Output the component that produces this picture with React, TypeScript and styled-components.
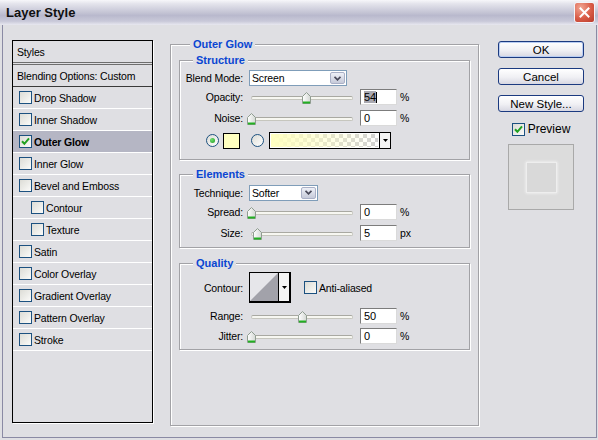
import styled, { createGlobalStyle } from 'styled-components';

const GlobalStyle = createGlobalStyle`
  html, body {
    margin: 0;
    padding: 0;
    background: #dfdfe3;
  }
  body {
    font-family: "Liberation Sans", Arial, sans-serif;
    font-size: 10.5px;
    letter-spacing: -0.15px;
    color: #000;
  }
`;

const Window = styled.div`
  width: 598px;
  height: 440px;
  display: flex;
  flex-direction: column;
  background: #dfdfe3;
  overflow: hidden;
`;

const TitleBar = styled.div`
  height: 25px;
  flex: none;
  box-sizing: border-box;
  display: flex;
  align-items: center;
  justify-content: space-between;
  padding: 0 3px 0 6px;
  background: linear-gradient(
    #f7f7fa 0%,
    #e4e4ec 15%,
    #c9c9d8 45%,
    #b9b9cd 62%,
    #c9c9d9 85%,
    #e8e8f0 100%
  );
`;

const Title = styled.span`
  font-size: 13px;
  font-weight: bold;
  letter-spacing: 0;
  color: #101010;
`;

const CloseButton = styled.div`
  width: 21px;
  height: 21px;
  box-sizing: border-box;
  border-radius: 3px;
  border: 1px solid #f4f4f8;
  background: radial-gradient(circle at 30% 25%, #f1a592, #d95c47 55%, #b73a2b);
  display: flex;
  align-items: center;
  justify-content: center;
`;

const Body = styled.div`
  flex: 1;
  display: flex;
  align-items: flex-start;
  margin: 0 1px 2px 2px;
  border: 1px solid #8a8aa4;
  border-top: none;
  padding: 15px 0 0 9px;
`;

/* left list of styles */

const StyleList = styled.div`
  width: 141px;
  height: 383px;
  flex: none;
  box-sizing: border-box;
  border: 1px solid #000;
  box-shadow: 1px 1px 0 #fff;
  display: flex;
  flex-direction: column;
`;

const ListHeader = styled.div<{ $double?: boolean }>`
  height: ${(p) => (p.$double ? 24 : 22)}px;
  box-sizing: border-box;
  display: flex;
  align-items: center;
  padding-left: 4px;
  border-bottom: ${(p) => (p.$double ? '3px double #6e6e6e' : '1px solid #3a3a3a')};
`;

const StyleRow = styled.div<{ $sub?: boolean; $active?: boolean }>`
  height: 22px;
  box-sizing: border-box;
  display: flex;
  align-items: center;
  gap: 2px;
  padding-left: ${(p) => (p.$sub ? 18 : 6)}px;
  border-bottom: 1px solid #fff;
  background: ${(p) => (p.$active ? '#b5b6c4' : 'transparent')};
  font-weight: ${(p) => (p.$active ? 'bold' : 'normal')};
`;

const Box = styled.span`
  width: 13px;
  height: 13px;
  flex: none;
  box-sizing: border-box;
  border: 1px solid #1c5180;
  background: linear-gradient(135deg, #dcdcd6, #fbfbf9);
  display: inline-flex;
  align-items: center;
  justify-content: center;
`;

const RadioDot = styled.span<{ $on?: boolean }>`
  width: 13px;
  height: 13px;
  flex: none;
  box-sizing: border-box;
  border-radius: 50%;
  border: 1px solid #1c5180;
  background: linear-gradient(135deg, #dcdcd6, #ffffff);
  display: inline-flex;
  align-items: center;
  justify-content: center;
  &::after {
    content: '';
    display: ${(p) => (p.$on ? 'block' : 'none')};
    width: 5px;
    height: 5px;
    border-radius: 50%;
    background: radial-gradient(circle at 35% 35%, #6fe06f, #1f9a1f);
  }
`;

/* center effect panel */

const Group = styled.fieldset<{ $top?: number; $pad: string }>`
  margin: ${(p) => p.$top ?? 0}px 0 0 0;
  padding: ${(p) => p.$pad};
  min-width: 0;
  border: 1px solid #a2a2a6;
  box-shadow: 1px 1px 0 #fff, inset 1px 1px 0 #fff;
`;

const EffectPanel = styled(Group)`
  width: 309px;
  height: 388px;
  box-sizing: border-box;
  flex: none;
  margin: -2px 0 0 17px;
`;

const GroupTitle = styled.legend<{ $indent: number }>`
  font-size: 11px;
  letter-spacing: 0;
  font-weight: bold;
  color: #0a46d2;
  line-height: 13px;
  padding: 0 3px;
  margin-left: ${(p) => p.$indent}px;
  background: #dfdfe3;
`;

const Row = styled.div<{ $gap?: number; $h?: number; $indent?: number }>`
  display: flex;
  align-items: center;
  height: ${(p) => p.$h ?? 16}px;
  margin-top: ${(p) => p.$gap ?? 0}px;
  padding-left: ${(p) => p.$indent ?? 0}px;
`;

const Label = styled.span`
  width: 63px;
  flex: none;
  text-align: right;
  white-space: nowrap;
  margin-right: 6px;
`;

const Select = styled.div<{ $w: number }>`
  width: ${(p) => p.$w}px;
  height: 16px;
  box-sizing: border-box;
  border: 1px solid #7f9db9;
  background: #fff;
  display: flex;
  align-items: center;
  padding: 0 1px 0 2px;
`;

const DropButton = styled.span`
  margin-left: auto;
  width: 15px;
  height: 12px;
  box-sizing: border-box;
  border: 1px solid #aab0c6;
  border-radius: 2px;
  background: linear-gradient(#eef0f7, #c6cad9);
  display: flex;
  align-items: center;
  justify-content: center;
`;

const Slider = styled.div`
  position: relative;
  width: 102px;
  height: 16px;
  flex: none;
  margin: 0 7px 0 2px;
  &::before {
    content: '';
    position: absolute;
    left: 0;
    right: 0;
    top: 7px;
    height: 2px;
    border-radius: 2px;
    background: #f7f7f1;
    border: 1px solid #c6c6be;
    border-top-color: #a9a9a2;
  }
`;

const Thumb = styled.svg`
  position: absolute;
  top: 3px;
  width: 9px;
  height: 12px;
`;

const NumField = styled.div`
  width: 37px;
  height: 16px;
  flex: none;
  box-sizing: border-box;
  background: #fff;
  border: 1px solid;
  border-color: #7c7c7c #dadada #dadada #7c7c7c;
  padding-left: 3px;
  display: flex;
  align-items: center;
  font-size: 11px;
`;

const Selected = styled.span`
  background: #a8a8b0;
  color: #000;
`;

const Caret = styled.span`
  width: 1px;
  height: 11px;
  background: #000;
`;

const Unit = styled.span`
  margin-left: 3px;
`;

const Swatch = styled.span`
  width: 17px;
  height: 16px;
  box-sizing: border-box;
  border: 1px solid #000;
  background: #ffffc0;
  margin: 0 11px 0 4px;
`;

const GradientPicker = styled.div`
  width: 122px;
  height: 17px;
  box-sizing: border-box;
  border: 1px solid #000;
  display: flex;
  margin-left: 5px;
`;

const GradientStrip = styled.span`
  flex: 1;
  border: 1px solid #fff;
  background: linear-gradient(to right, #ffffc0, rgba(255, 255, 192, 0)),
    repeating-conic-gradient(#d2d2d2 0 25%, #ffffff 0 50%) 0 0 / 8px 8px;
`;

const PickerArrow = styled.span`
  width: 10px;
  flex: none;
  border-left: 1px solid #000;
  background: #f4f4f4;
  display: flex;
  align-items: center;
  justify-content: center;
`;

const ContourPicker = styled.div`
  width: 42px;
  height: 31px;
  box-sizing: border-box;
  border: 1px solid #000;
  border-width: 1px 2px 2px 1px;
  display: flex;
  margin-right: 13px;
`;

const ContourCurve = styled.svg`
  flex: 1;
  height: 100%;
  display: block;
`;

const CheckLabel = styled.label`
  display: flex;
  align-items: center;
  gap: 2px;
`;

/* right column */

const Actions = styled.div`
  width: 86px;
  flex: none;
  margin: 1px 0 0 19px;
  display: flex;
  flex-direction: column;
  align-items: center;
  gap: 10px;
`;

const Button = styled.button<{ $default?: boolean }>`
  width: 86px;
  height: 17px;
  padding: 0;
  font-family: inherit;
  font-size: 11.5px;
  color: #000;
  border: 1px solid #1b3a80;
  border-radius: 3px;
  background: linear-gradient(#ffffff, #f0f0f4 55%, #d7d7e2);
  box-shadow: ${(p) => (p.$default ? 'inset 0 0 0 1px #b9cdf2' : 'none')};
`;

const PreviewToggle = styled(CheckLabel)`
  gap: 3px;
  font-size: 12px;
  letter-spacing: 0;
`;

const PreviewBox = styled.div`
  width: 66px;
  height: 66px;
  margin-top: -2px;
  box-sizing: border-box;
  border: 1px solid #a9a9a9;
  background: #dcdcdc;
  display: flex;
  align-items: center;
  justify-content: center;
`;

const PreviewSquare = styled.div`
  width: 31px;
  height: 31px;
  box-sizing: border-box;
  border: 1px solid #eeeeee;
  background: #d9d9d9;
  box-shadow: 0 0 3px #fafafa;
`;

const CheckMark = () => (
  <svg width="9" height="9" viewBox="0 0 9 9">
    <path d="M1 4.2 L3.4 6.8 L8 1.4" fill="none" stroke="#21a121" strokeWidth="2" />
  </svg>
);

const Chevron = () => (
  <svg width="7" height="5" viewBox="0 0 7 5">
    <path d="M0.5 0.8 L3.5 3.8 L6.5 0.8" fill="none" stroke="#4a4a5a" strokeWidth="1.8" />
  </svg>
);

const DownTriangle = () => (
  <svg width="5" height="3" viewBox="0 0 5 3">
    <path d="M0 0 H5 L2.5 3 Z" fill="#000" />
  </svg>
);

const SliderControl = ({ pct }: { pct: number }) => (
  <Slider>
    <Thumb viewBox="0 0 9 12" style={{ left: `calc(${pct}% - 4.5px)` }}>
      <defs>
        <linearGradient id="thumbFill" x1="0" y1="0" x2="1" y2="0">
          <stop offset="0" stopColor="#ffffff" />
          <stop offset="1" stopColor="#d4d8d4" />
        </linearGradient>
      </defs>
      <path d="M0.5 4.5 L4.5 0.5 L8.5 4.5 L8.5 11.5 L0.5 11.5 Z" fill="url(#thumbFill)" stroke="#8f9c90" />
      <rect x="1" y="9.5" width="7" height="2" fill="#22b022" />
    </Thumb>
  </Slider>
);

type StyleEntry = { label: string; sub?: boolean; checked?: boolean; active?: boolean };

const styleEntries: StyleEntry[] = [
  { label: 'Drop Shadow' },
  { label: 'Inner Shadow' },
  { label: 'Outer Glow', checked: true, active: true },
  { label: 'Inner Glow' },
  { label: 'Bevel and Emboss' },
  { label: 'Contour', sub: true },
  { label: 'Texture', sub: true },
  { label: 'Satin' },
  { label: 'Color Overlay' },
  { label: 'Gradient Overlay' },
  { label: 'Pattern Overlay' },
  { label: 'Stroke' },
];

const App = () => (
  <Window>
    <GlobalStyle />
    <TitleBar>
      <Title>Layer Style</Title>
      <CloseButton>
        <svg width="11" height="11" viewBox="0 0 11 11">
          <path d="M1.5 1.5 L9.5 9.5 M9.5 1.5 L1.5 9.5" stroke="#fff" strokeWidth="2" strokeLinecap="square" />
        </svg>
      </CloseButton>
    </TitleBar>
    <Body>
      <StyleList>
        <ListHeader $double>Styles</ListHeader>
        <ListHeader>Blending Options: Custom</ListHeader>
        {styleEntries.map((s) => (
          <StyleRow key={s.label} $sub={s.sub} $active={s.active}>
            <Box>{s.checked && <CheckMark />}</Box>
            {s.label}
          </StyleRow>
        ))}
      </StyleList>

      <EffectPanel $pad="3px 8px 0">
        <GroupTitle $indent={11}>Outer Glow</GroupTitle>

        <Group $pad="3px 0 10px">
          <GroupTitle $indent={13}>Structure</GroupTitle>
          <Row>
            <Label>Blend Mode:</Label>
            <Select $w={98}>
              Screen
              <DropButton>
                <Chevron />
              </DropButton>
            </Select>
          </Row>
          <Row $gap={3}>
            <Label>Opacity:</Label>
            <SliderControl pct={54} />
            <NumField>
              <Selected>54</Selected>
              <Caret />
            </NumField>
            <Unit>%</Unit>
          </Row>
          <Row $gap={5}>
            <Label>Noise:</Label>
            <SliderControl pct={0} />
            <NumField>0</NumField>
            <Unit>%</Unit>
          </Row>
          <Row $gap={6} $h={17} $indent={26}>
            <RadioDot $on />
            <Swatch />
            <RadioDot />
            <GradientPicker>
              <GradientStrip />
              <PickerArrow>
                <DownTriangle />
              </PickerArrow>
            </GradientPicker>
          </Row>
        </Group>

        <Group $top={8} $pad="4px 0 6px">
          <GroupTitle $indent={13}>Elements</GroupTitle>
          <Row $h={15}>
            <Label>Technique:</Label>
            <Select $w={69}>
              Softer
              <DropButton>
                <Chevron />
              </DropButton>
            </Select>
          </Row>
          <Row $gap={4}>
            <Label>Spread:</Label>
            <SliderControl pct={0} />
            <NumField>0</NumField>
            <Unit>%</Unit>
          </Row>
          <Row $gap={5}>
            <Label>Size:</Label>
            <SliderControl pct={6} />
            <NumField>5</NumField>
            <Unit>px</Unit>
          </Row>
        </Group>

        <Group $top={9} $pad="2px 0 5px">
          <GroupTitle $indent={13}>Quality</GroupTitle>
          <Row $h={31}>
            <Label>Contour:</Label>
            <ContourPicker>
              <ContourCurve viewBox="0 0 30 29" preserveAspectRatio="none">
                <rect width="30" height="29" fill="#e6e6ea" />
                <path d="M0 29 L30 0 L30 29 Z" fill="#a2a2aa" />
              </ContourCurve>
              <PickerArrow>
                <DownTriangle />
              </PickerArrow>
            </ContourPicker>
            <CheckLabel>
              <Box />
              Anti-aliased
            </CheckLabel>
          </Row>
          <Row $gap={5}>
            <Label>Range:</Label>
            <SliderControl pct={50} />
            <NumField>50</NumField>
            <Unit>%</Unit>
          </Row>
          <Row $gap={4}>
            <Label>Jitter:</Label>
            <SliderControl pct={0} />
            <NumField>0</NumField>
            <Unit>%</Unit>
          </Row>
        </Group>
      </EffectPanel>

      <Actions>
        <Button $default>OK</Button>
        <Button>Cancel</Button>
        <Button>New Style...</Button>
        <PreviewToggle>
          <Box>
            <CheckMark />
          </Box>
          Preview
        </PreviewToggle>
        <PreviewBox>
          <PreviewSquare />
        </PreviewBox>
      </Actions>
    </Body>
  </Window>
);

export default App;
